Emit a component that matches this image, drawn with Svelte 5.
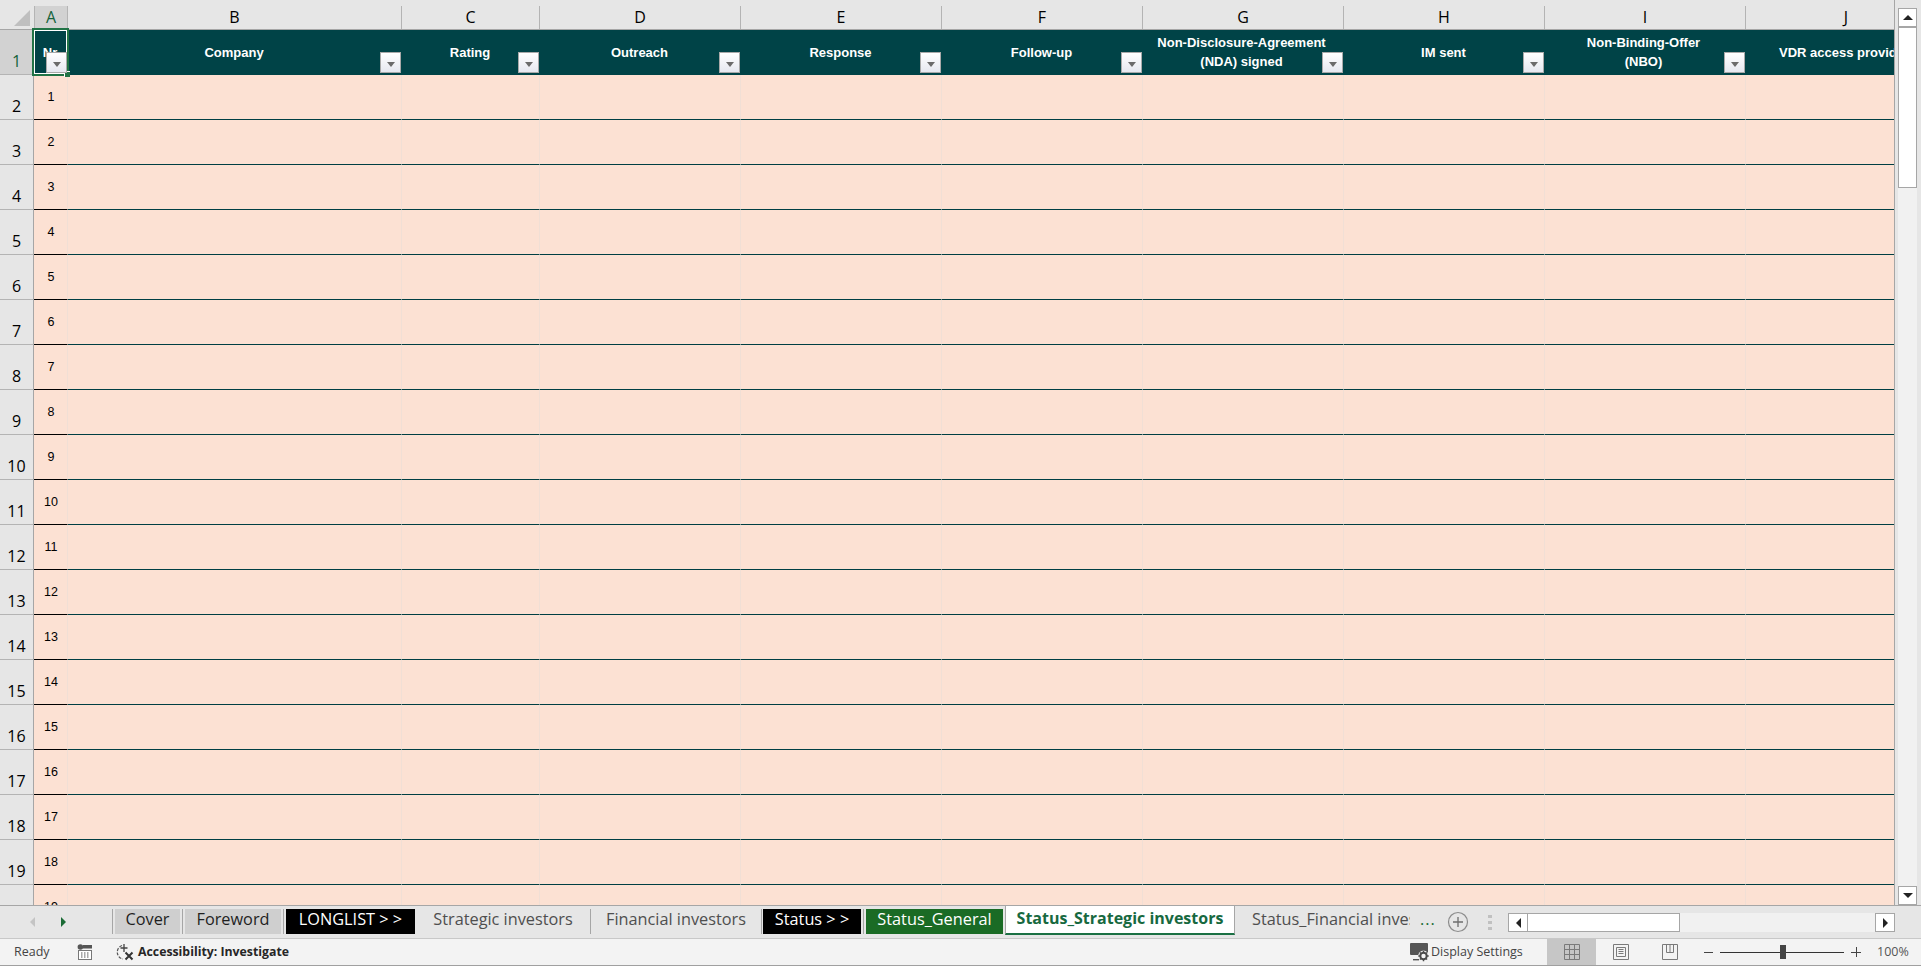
<script>
  const columns = [
    { letter: 'A', head: ['Nr'] },
    { letter: 'B', head: ['Company'] },
    { letter: 'C', head: ['Rating'] },
    { letter: 'D', head: ['Outreach'] },
    { letter: 'E', head: ['Response'] },
    { letter: 'F', head: ['Follow-up'] },
    { letter: 'G', head: ['Non-Disclosure-Agreement', '(NDA) signed'] },
    { letter: 'H', head: ['IM sent'] },
    { letter: 'I', head: ['Non-Binding-Offer', '(NBO)'] },
    { letter: 'J', head: ['VDR access provided'] }
  ];
  const rows = Array.from({ length: 19 }, (_, i) => i + 1);
  const blanks = columns.slice(1);
</script>

<div class="app">
  <div class="sheet">
    <div class="grid">
      <div class="colhead">
        <div class="corner">
          <svg width="16" height="16" viewBox="0 0 16 16"><polygon points="16,0 16,16 0,16" fill="#bfbfbf" /></svg>
        </div>
        <div class="letters cols">
          {#each columns as c, i}
            <div class="letter" class:on={i === 0}>{c.letter}</div>
          {/each}
        </div>
      </div>

      <div class="row">
        <div class="rowhead on">1</div>
        <div class="cols header">
          {#each columns as c, i}
            <div class="hcell">
              <div class="hlabel" class:two={c.head.length > 1}>
                {#each c.head as line}<span>{line}</span>{/each}
              </div>
              {#if i === 0}<div class="sel"><i class="handle"></i></div>{/if}
              <button class="filter" aria-label="Filter"><i></i></button>
            </div>
          {/each}
        </div>
      </div>

      {#each rows as r}
        <div class="row">
          <div class="rowhead">{r + 1}</div>
          <div class="cols data">
            <div class="cell num">{r}</div>
            {#each blanks as _}<div class="cell"></div>{/each}
          </div>
        </div>
      {/each}
    </div>

    <div class="vscroll">
      <div class="sbtn v"><i class="tri up"></i></div>
      <div class="vthumb"></div>
      <div class="vtrack"></div>
      <div class="sbtn v"><i class="tri down"></i></div>
    </div>
  </div>

  <div class="tabbar">
    <div class="nav">
      <i class="tri left dim"></i>
      <i class="tri right green"></i>
    </div>
    <div class="tab w-cover"><span class="fill grey">Cover</span></div>
    <div class="tab w-fore"><span class="fill grey">Foreword</span></div>
    <div class="tab w-long"><span class="fill black">LONGLIST &gt; &gt;</span></div>
    <div class="tab w-strat"><span class="fill plain">Strategic investors</span></div>
    <div class="tab w-fin"><span class="fill plain">Financial investors</span></div>
    <div class="tab w-stat"><span class="fill black">Status &gt; &gt;</span></div>
    <div class="tab w-gen"><span class="fill green">Status_General</span></div>
    <div class="active">Status_Strategic investors</div>
    <div class="clipped"><span>Status_Financial investors</span></div>
    <div class="more">...</div>
    <svg class="add" width="22" height="22" viewBox="0 0 22 22">
      <circle cx="11" cy="11" r="9.5" fill="none" stroke="#8c8c8c" stroke-width="1.2" />
      <path d="M11 6v10M6 11h10" stroke="#6e6e6e" stroke-width="1.3" />
    </svg>
    <div class="dots"><i></i><i></i><i></i></div>
    <div class="hscroll">
      <div class="sbtn h"><i class="tri left"></i></div>
      <div class="hthumb"></div>
      <div class="htrack"></div>
      <div class="sbtn h"><i class="tri right"></i></div>
    </div>
  </div>

  <div class="status">
    <span class="ready">Ready</span>
    <svg class="macro" width="16" height="16" viewBox="0 0 16 16">
      <circle cx="3.4" cy="3" r="2.8" fill="#555" />
      <rect x="6" y="1" width="9" height="3.5" fill="#555" />
      <rect x="1.5" y="6.5" width="13" height="9" fill="#fff" stroke="#777" />
      <path d="M4 9h1.5M7 9h1.5M10 9h1.5M4 11h1.5M7 11h1.5M10 11h1.5M4 13h1.5M7 13h1.5M10 13h1.5" stroke="#555" />
    </svg>
    <svg class="access" width="20" height="18" viewBox="0 0 20 18">
      <path d="M7 2.5A7 7 0 0 0 8 16" fill="none" stroke="#555" stroke-width="1.2" stroke-dasharray="3 1.4" />
      <path d="M9 1v8M5.5 5h7" stroke="#444" stroke-width="1.3" />
      <path d="M10.5 9.5l7 7M17.5 9.5l-7 7" stroke="#333" stroke-width="2" />
    </svg>
    <b class="acctext">Accessibility: Investigate</b>
    <span class="spacer"></span>
    <svg class="display" width="20" height="20" viewBox="0 0 20 20">
      <rect x="0" y="1" width="18" height="12" rx="1" fill="#555" />
      <path d="M3 17h6v1.4H3z" fill="#555" />
      <circle cx="13.5" cy="14" r="5.4" fill="#f3f3f3" />
      <circle cx="13.5" cy="14" r="3.2" fill="none" stroke="#4a4a4a" stroke-width="2" />
      <path d="M13.5 8.8v2M13.5 17.2v2M8.3 14h2M16.7 14h2M9.9 10.4l1.4 1.4M15.7 16.2l1.4 1.4M17.1 10.4l-1.4 1.4M11.3 16.2l-1.4 1.4" stroke="#4a4a4a" stroke-width="1.4" />
    </svg>
    <span class="dtext">Display Settings</span>
    <div class="view on">
      <svg width="16" height="16" viewBox="0 0 16 16">
        <path d="M.5.5h15v15H.5zM5.5.5v15M10.5.5v15M.5 5.5h15M.5 10.5h15" fill="none" stroke="#7a7a7a" />
      </svg>
    </div>
    <div class="view">
      <svg width="16" height="16" viewBox="0 0 16 16">
        <path d="M.5.5h15v15H.5z" fill="none" stroke="#7a7a7a" />
        <path d="M3.5 3.5h9v9h-9zM5.5 5.5h5M5.5 7.5h5M5.5 9.5h5" fill="none" stroke="#7a7a7a" />
      </svg>
    </div>
    <div class="view">
      <svg width="16" height="16" viewBox="0 0 16 16">
        <path d="M.5.5h15v15H.5zM4.5.5v8h7v-8M8 .5v8" fill="none" stroke="#7a7a7a" />
      </svg>
    </div>
    <span class="zminus"></span>
    <div class="slider"><i></i></div>
    <span class="zplus"></span>
    <span class="pct">100%</span>
  </div>
</div>

<style>
  :global(body) { margin: 0; overflow: hidden; background: #e6e6e6; }

  .app {
    width: 1921px; height: 966px; display: flex; flex-direction: column;
    font-family: "Open Sans", "Liberation Sans", sans-serif; overflow: hidden;
  }

  .sheet { height: 905px; flex: none; display: flex; border-bottom: 1px solid #a6a6a6; }
  .grid { width: 1894px; flex: none; overflow: hidden; background: #e6e6e6; border-right: 1px solid #a6a6a6; }

  .cols { display: grid; grid-template-columns: 34px 334px 138px repeat(7, 201px); flex: none; }

  .colhead { display: flex; height: 30px; padding-top: 6px; box-sizing: border-box; border-bottom: 1px solid #a6a6a6; }
  .corner { width: 34px; flex: none; box-sizing: border-box; padding: 4px 0 0 14px; }
  .corner svg { display: block; }
  .letter {
    border-right: 1px solid #b4b4b4; text-align: center; font-size: 16px; line-height: 23px;
    color: #000; box-sizing: border-box;
  }
  .letter.on { background: #d2d2d2; color: #14633c; border-left: 1px solid #b4b4b4; }

  .row { display: flex; height: 45px; flex: none; }
  .rowhead {
    width: 34px; flex: none; box-sizing: border-box; border-right: 1px solid #a6a6a6; border-bottom: 1px solid #b4b4b4;
    display: flex; align-items: flex-end; justify-content: center; font-size: 16px; line-height: 22px; padding: 0 0 2px 0; color: #000;
  }
  .rowhead.on { background: #d2d2d2; color: #14633c; }

  .header { background: #004347; }
  .hcell {
    position: relative; display: flex; align-items: center; justify-content: center;
    font: bold 13px/19px "Liberation Sans", sans-serif; color: #fff; min-width: 0; padding-right: 2px;
  }
  .hlabel { display: flex; flex-direction: column; align-items: center; white-space: nowrap; }
  .hlabel.two { margin: 0 2px 2px 0; }
  .filter {
    position: absolute; right: 1px; bottom: 2px; width: 21px; height: 21px; padding: 0;
    border: 1px solid #a9a9a9; background: linear-gradient(#fff, #e6e8f0); display: flex; align-items: center; justify-content: center;
  }
  .filter i { width: 0; height: 0; border-left: 4px solid transparent; border-right: 4px solid transparent; border-top: 5px solid #6b6b6b; margin-top: 3px; }
  .sel {
    position: absolute; inset: -2px -1px -1px -2px; border: 2px solid #217346;
    box-shadow: inset 0 0 0 1px #fff; pointer-events: none;
  }
  .handle {
    position: absolute; right: -3px; bottom: -3px; width: 5px; height: 5px;
    background: #217346; border-left: 1px solid #fff; border-top: 1px solid #fff;
  }

  .data { background: #fce1d3; }
  .cell { border-right: 1px solid #f1dfd5; border-bottom: 1px solid #003f43; box-sizing: border-box; }
  .num {
    display: flex; align-items: center; justify-content: center; padding: 0 0 0 1px; border-bottom-color: #000;
    font: 12.5px/14px "Liberation Sans", sans-serif; color: #000;
  }

  .vscroll { flex: 1; display: flex; flex-direction: column; padding: 8px 4px 0 3px; background: #e6e6e6; box-sizing: border-box; }
  .sbtn {
    box-sizing: border-box; background: #fff; border: 1px solid #a6a6a6; display: flex; align-items: center; justify-content: center; flex: none;
  }
  .sbtn.v { height: 19px; }
  .vthumb { height: 161px; flex: none; background: #fff; border: 1px solid #a6a6a6; box-sizing: border-box; }
  .vtrack { flex: 1; background: #f1f1f1; }
  .tri { width: 0; height: 0; display: block; flex: none; }
  .tri.up { border-left: 5px solid transparent; border-right: 5px solid transparent; border-bottom: 5px solid #222; }
  .tri.down { border-left: 5px solid transparent; border-right: 5px solid transparent; border-top: 5px solid #222; }
  .tri.left { border-top: 5px solid transparent; border-bottom: 5px solid transparent; border-right: 5px solid #222; }
  .tri.right { border-top: 5px solid transparent; border-bottom: 5px solid transparent; border-left: 5px solid #222; }
  .tri.left.dim { border-right-color: #c4c4c4; }
  .tri.right.green { border-left-color: #1a6b35; }

  .tabbar {
    height: 32px; flex: none; display: flex; align-items: flex-start; background: #e6e6e6;
    font-size: 16.3px; line-height: 20px; white-space: nowrap;
  }
  .nav { width: 112px; flex: none; height: 25px; margin-top: 3px; display: flex; align-items: center; box-sizing: border-box; padding-left: 30px; gap: 26px; }
  .tab { flex: none; height: 25px; margin-top: 3px; box-sizing: border-box; border-left: 1px solid #a6a6a6; display: flex; padding: 0 2px; }
  .w-cover { width: 70px; }
  .w-fore { width: 101px; }
  .w-long { width: 133px; padding-right: 1px; }
  .w-strat { width: 174px; border-left: none; }
  .w-fin { width: 171px; }
  .w-stat { width: 102px; padding-left: 1px; }
  .w-gen { width: 142px; padding-right: 2px; }
  .fill { flex: 1; text-align: center; }
  .fill.grey { background: #cfcfcf; color: #1f1f1f; }
  .fill.black { background: #000; color: #fff; }
  .fill.plain { color: #4f4f4f; }
  .fill.green { background: #1a6b25; color: #fff; }
  .active {
    width: 230px; height: 29px; flex: none; box-sizing: border-box; background: #fff; color: #17693f; font-weight: 700;
    border-left: 1px solid #a6a6a6; border-right: 1px solid #a6a6a6; border-bottom: 2px solid #1a7043; text-align: center; line-height: 25px; font-size: 16px;
  }
  .clipped { width: 175px; flex: none; margin-top: 3px; padding-left: 17px; box-sizing: border-box; color: #4f4f4f; overflow: hidden; height: 25px; }
  .clipped span { display: block; width: 158px; overflow: hidden; }
  .more { width: 27px; margin-left: 10px; flex: none; margin-top: 3px; color: #1a6b35; letter-spacing: 1px; }
  .add { flex: none; margin-top: 5px; }
  .dots { width: 20px; margin: 9px 0 0 19px; flex: none; display: flex; flex-direction: column; gap: 3px; align-items: flex-start; }
  .dots i { width: 4px; height: 3px; background: #c0c0c0; display: block; }
  .hscroll { width: 387px; height: 19px; margin: 7px 0 0; flex: none; display: flex; background: #f1f1f1; }
  .sbtn.h { width: 20px; }
  .hthumb { width: 152px; flex: none; background: #fff; border: 1px solid #a6a6a6; border-left: none; box-sizing: border-box; }
  .htrack { flex: 1; }

  .status {
    height: 28px; flex: none; box-sizing: border-box; background: #f3f3f3; border-top: 1px solid #c8c8c8; border-bottom: 1px solid #a0a0a0;
    display: flex; align-items: center; font-size: 12.5px; color: #444;
  }
  .ready { margin-left: 14px; width: 63px; flex: none; padding-bottom: 2px; }
  .macro { flex: none; }
  .access { flex: none; margin-left: 22px; }
  .acctext { margin-left: 3px; color: #262626; font-size: 12.3px; white-space: nowrap; padding-bottom: 2px; }
  .spacer { flex: 1; }
  .display { flex: none; margin-right: 1px; }
  .dtext { width: 116px; flex: none; white-space: nowrap; padding-bottom: 2px; }
  .view { width: 49px; height: 26px; flex: none; display: flex; align-items: center; justify-content: center; }
  .view.on { background: #c6c6c6; }
  .zminus { width: 9px; height: 1px; background: #444; flex: none; margin-left: 10px; }
  .slider { width: 124px; height: 1px; background: #333; margin-left: 7px; position: relative; flex: none; }
  .slider i { position: absolute; left: 60px; top: -7px; width: 6px; height: 14px; background: #444; }
  .zplus {
    width: 10px; height: 10px; margin-left: 7px; flex: none;
    background: linear-gradient(#444, #444) center/100% 1px no-repeat, linear-gradient(#444, #444) center/1px 100% no-repeat;
  }
  .pct { margin: 0 13px 0 16px; width: 31px; flex: none; color: #555; white-space: nowrap; padding-bottom: 2px; }
</style>
